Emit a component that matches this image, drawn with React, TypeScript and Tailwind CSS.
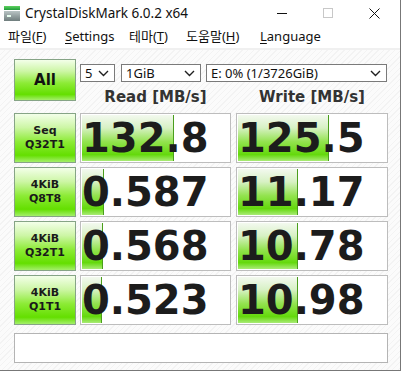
import { FC } from 'react';

interface Row {
  l1: string;
  l2: string;
  read: string;
  write: string;
  rw: number; // read bar width in px
  ww: number; // write bar width in px
}

const rows: Row[] = [
  { l1: 'Seq', l2: 'Q32T1', read: '132.8', write: '125.5', rw: 92, ww: 91 },
  { l1: '4KiB', l2: 'Q8T8', read: '0.587', write: '11.17', rw: 22, ww: 60 },
  { l1: '4KiB', l2: 'Q32T1', read: '0.568', write: '10.78', rw: 21, ww: 60 },
  { l1: '4KiB', l2: 'Q1T1', read: '0.523', write: '10.98', rw: 20, ww: 60 },
];

const uiFont = "font-['Noto_Sans','Noto_Sans_CJK_KR',sans-serif]";
const boldFont = "font-['DejaVu_Sans',sans-serif] font-bold";
const btnBg =
  'bg-[linear-gradient(to_bottom,#f3ffe9_0%,#cdf6a6_28%,#8ceb35_58%,#64df00_86%,#a4ef6a_100%)]';
const barBg =
  'bg-[linear-gradient(to_bottom,#f3f9ef_0%,#d7f1c4_28%,#93e34f_58%,#64d90c_86%,#a9eb76_100%)]';

const Chevron: FC = () => (
  <svg width="11" height="7" viewBox="0 0 11 7" className="shrink-0">
    <path d="M1 1l4.5 4.5L10 1" fill="none" stroke="#202020" strokeWidth="1.4" />
  </svg>
);

const Select: FC<{ label: string; w: string }> = ({ label, w }) => (
  <div
    className={`${w} h-[18px] border border-[#7a7a7a] bg-white flex items-center justify-between pl-[4px] pr-[5px] text-[13px] leading-none text-[#111]`}
  >
    <span>{label}</span>
    <Chevron />
  </div>
);

const ResultBox: FC<{ value: string; bar: number; w: string }> = ({ value, bar, w }) => (
  <div className={`relative ${w} h-[50px] border border-[#bdbdbd] bg-white overflow-hidden`}>
    <div
      className={`absolute left-[1px] top-[1px] bottom-[1px] ${barBg} border-r border-[#4a9e1c]`}
      style={{ width: bar }}
    />
    <div className={`relative flex items-center h-full pl-[1px] text-[40px] leading-none text-[#1c1c1c] ${boldFont}`}>
      {value}
    </div>
  </div>
);

const Menu: FC<{ pre: string; key1: string; post: string; w: string }> = ({ pre, key1, post, w }) => (
  <div className={`${w} shrink-0`}>
    {pre}
    <span className="underline underline-offset-2">{key1}</span>
    {post}
  </div>
);

export default function App() {
  return (
    <div className={`w-[402px] h-[372px] bg-white ${uiFont}`}>
      <div className="w-[401px] h-[371px] border-r border-b border-[#777] flex flex-col">
        {/* title bar */}
        <div className="h-[26px] flex items-center shrink-0">
          <svg width="16" height="15" viewBox="0 0 16 15" className="ml-[4px]">
            <defs>
              <linearGradient id="g" x1="0" y1="0" x2="0" y2="1">
                <stop offset="0" stopColor="#5fd35f" />
                <stop offset="1" stopColor="#1f9a3a" />
              </linearGradient>
              <linearGradient id="d" x1="0" y1="0" x2="0" y2="1">
                <stop offset="0" stopColor="#b9c4c4" />
                <stop offset="1" stopColor="#6f7d7d" />
              </linearGradient>
            </defs>
            <rect x="0" y="0" width="16" height="4" fill="url(#g)" />
            <rect x="0" y="5" width="16" height="10" fill="url(#d)" />
            <rect x="3" y="9" width="4" height="2" fill="#e8fff0" />
          </svg>
          <span className="ml-[5px] text-[13.5px] text-[#111]">CrystalDiskMark 6.0.2 x64</span>
          <div className="ml-auto flex items-center">
            <div className="w-[46px] flex justify-center">
              <div className="w-[10px] h-[1px] bg-[#111]" />
            </div>
            <div className="w-[46px] flex justify-center">
              <div className="w-[10px] h-[10px] border border-[#c8c8c8]" />
            </div>
            <div className="w-[46px] flex justify-center">
              <svg width="11" height="11" viewBox="0 0 11 11">
                <path d="M0.5 0.5l10 10M10.5 0.5l-10 10" stroke="#111" strokeWidth="1" />
              </svg>
            </div>
            <div className="w-[3px]" />
          </div>
        </div>

        {/* menu bar */}
        <div className="h-[22px] flex items-center pl-[8px] text-[13px] text-[#111] shrink-0">
          <Menu pre="파일(" key1="F" post=")" w="w-[57px]" />
          <Menu pre="" key1="S" post="ettings" w="w-[64px]" />
          <Menu pre="테마(" key1="T" post=")" w="w-[57px]" />
          <Menu pre="도움말(" key1="H" post=")" w="w-[74px]" />
          <Menu pre="" key1="L" post="anguage" w="w-[80px]" />
        </div>
        <div className="h-[2px] bg-[#f0f0f0] shrink-0" />

        {/* body */}
        <div className="flex-1 pl-[14px] pt-[9px] bg-[repeating-linear-gradient(135deg,#fbfbfb_0px,#fbfbfb_3px,#f3f3f3_3px,#f3f3f3_4px)]">
          <div className="flex items-start h-[42px]">
            <div
              className={`w-[62px] h-[42px] border border-[#86a486] ${btnBg} flex items-center justify-center text-[15px] text-[#111] ${boldFont}`}
            >
              All
            </div>
            <div className="ml-[4px] flex flex-col">
              <div className="flex pt-[5px]">
                <Select label="5" w="w-[35px]" />
                <div className="w-[6px]" />
                <Select label="1GiB" w="w-[80px]" />
                <div className="w-[5px]" />
                <Select label="E: 0% (1/3726GiB)" w="w-[181px]" />
              </div>
              <div className={`flex mt-[8px] text-[15px] leading-none text-[#333] ${boldFont}`}>
                <div className="w-[151px] text-center">Read [MB/s]</div>
                <div className="w-[5px]" />
                <div className="w-[152px] text-center">Write [MB/s]</div>
              </div>
            </div>
          </div>

          <div className="flex flex-col gap-[4px] mt-[12px]">
            {rows.map((r, i) => (
              <div key={i} className="flex">
                <div
                  className={`w-[62px] h-[50px] border border-[#86a486] ${btnBg} flex flex-col items-center justify-center text-[11px] leading-[14px] text-[#1a1a1a] ${boldFont}`}
                >
                  <span>{r.l1}</span>
                  <span>{r.l2}</span>
                </div>
                <div className="w-[4px]" />
                <ResultBox value={r.read} bar={r.rw} w="w-[151px]" />
                <div className="w-[5px]" />
                <ResultBox value={r.write} bar={r.ww} w="w-[152px]" />
              </div>
            ))}
          </div>

          <div className="mt-[8px] w-[374px] h-[30px] border border-[#b4b4b4] bg-white" />
        </div>
      </div>
    </div>
  );
}
